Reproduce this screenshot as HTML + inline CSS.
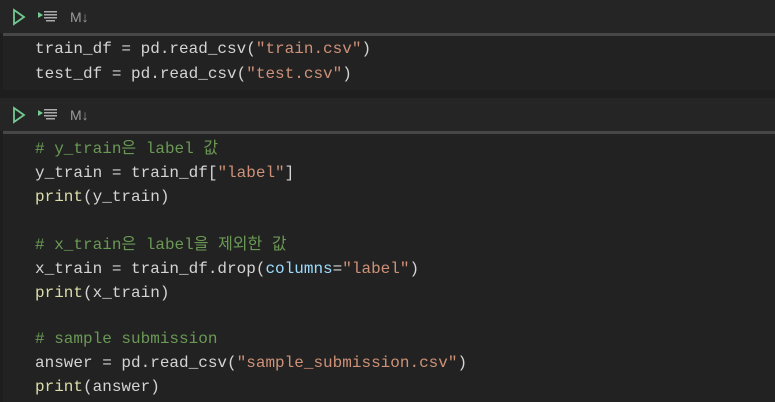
<!DOCTYPE html>
<html><head><meta charset="utf-8"><style>
body{margin:0;width:775px;height:402px;background:#1e1e1e;overflow:hidden;position:relative;font-family:"Liberation Mono","Noto Sans CJK KR",monospace;}
.hdr{position:absolute;left:0;width:775px;height:33px;background:#252526;}
.bar{position:absolute;left:3px;width:772px;height:3px;background:#474747;}
.code{position:absolute;left:3px;width:772px;background:#222222;}
.ln{position:absolute;left:35px;font-size:16px;line-height:24px;color:#d4d4d4;white-space:pre;}
.c{color:#6a9955}.s{color:#ce9178}.f{color:#dcdcaa}.p{color:#9cdcfe}
.md{position:absolute;left:70px;font-family:"Liberation Sans",sans-serif;font-size:14px;color:#9a9a9a;}
</style></head><body>
<div class="hdr" style="top:0"></div>
<div class="bar" style="top:33px"></div>
<div class="code" style="top:36px;height:54px"></div>
<div class="hdr" style="top:98px"></div>
<div class="bar" style="top:131px"></div>
<div class="code" style="top:134px;height:268px"></div>

<svg style="position:absolute;left:0;top:0" width="70" height="130">
<g fill="none" stroke="#73c991" stroke-width="1.8"><path d="M14 10 L24 17 L14 24 Z"/><path d="M14 108 L24 115 L14 122 Z"/></g>
<g fill="#73c991"><path d="M38 12 L43 15 L38 18Z"/><path d="M38 110 L43 113 L38 116Z"/></g>
<g fill="#aaa"><rect x="44" y="11" width="13" height="1.5"/><rect x="44" y="14" width="13" height="1.5"/><rect x="44" y="17" width="13" height="1.5"/><rect x="46" y="20" width="9" height="1.5"/>
<rect x="44" y="109" width="13" height="1.5"/><rect x="44" y="112" width="13" height="1.5"/><rect x="44" y="115" width="13" height="1.5"/><rect x="46" y="118" width="9" height="1.5"/></g>
</svg>
<div class="md" style="top:9px">M↓</div>
<div class="md" style="top:107px">M↓</div>

<div class="ln" style="top:37px">train_df = pd.read_csv(<span class="s">"train.csv"</span>)</div>
<div class="ln" style="top:62px">test_df = pd.read_csv(<span class="s">"test.csv"</span>)</div>

<div class="ln c" style="top:137px"># y_train은 label 값</div>
<div class="ln" style="top:161px">y_train = train_df[<span class="s">"label"</span>]</div>
<div class="ln" style="top:185px"><span class="f">print</span>(y_train)</div>
<div class="ln c" style="top:233px"># x_train은 label을 제외한 값</div>
<div class="ln" style="top:257px">x_train = train_df.drop(<span class="p">columns</span>=<span class="s">"label"</span>)</div>
<div class="ln" style="top:281px"><span class="f">print</span>(x_train)</div>
<div class="ln c" style="top:327px"># sample submission</div>
<div class="ln" style="top:351px">answer = pd.read_csv(<span class="s">"sample_submission.csv"</span>)</div>
<div class="ln" style="top:375px"><span class="f">print</span>(answer)</div>
</body></html>
